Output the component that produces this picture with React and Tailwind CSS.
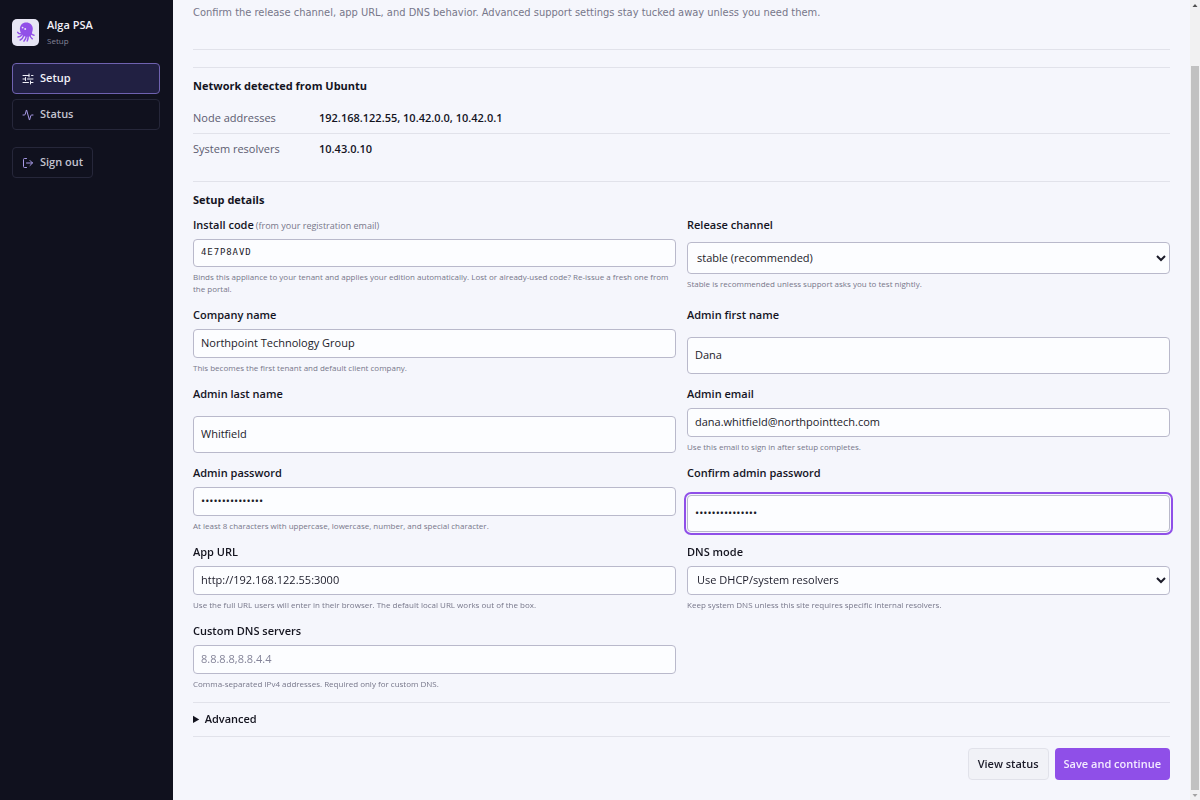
import React, { useState } from 'react';
import { Activity, LogOut } from 'lucide-react';

const boxClass =
    'block w-full rounded-[4px] border border-[#b9b9cb] bg-[#fcfdff] pb-0.5 text-[#1b1b29] placeholder-[#85859a] outline-[#8f4fe8] focus:outline-2 focus:outline-offset-1';
const inputClass = `${boxClass} px-[7px] text-[11px] leading-4`;
const selectClass = `${boxClass} px-[5px] text-[11px] leading-4`;

const OctopusLogo = () => (
    <svg viewBox="0 0 27 27" className="h-[27px] w-[27px] shrink-0" aria-hidden="true">
        <rect width="27" height="27" rx="5" fill="#e6e5f4" />
        <path
            d="M14.300 3.400c3.700 0 6.500 2.600 6.500 6.200 0 2.200-.7 3.600-1 5.100-.4 1.700-2 3.100-4.500 3.100-2.800 0-5-1.100-5.900-3-.9-1.600-1.500-3-1.500-4.900 0-3.800 2.600-6.500 6.400-6.500z"
            fill="#9150e8"
        />
        <g fill="none" stroke="#9150e8" strokeWidth="1.500" strokeLinecap="round">
            <path d="M9.200 14.800c-1.500.2-2.700-.3-3.500-1.500" />
            <path d="M10 15.800c-1.100 1.400-2.500 2.200-4 2.200" />
            <path d="M11.800 16.400c-.7 2-1.800 3.500-3.600 4.600" />
            <path d="M14.500 16.600c-.4 2.200-1.100 3.900-2.500 5.500" />
            <path d="M16.200 16.400c.1 2.300-.1 3.900-1 5.600" />
            <path d="M17.600 15.600c.5 1.900 1.300 3.200 2.700 4.200" />
            <path d="M18.700 13.900c.8 1.500 1.900 2.300 3.300 2.400" />
        </g>
        <circle cx="10.600" cy="8.600" r=".9" fill="#e6e5f4" />
        <circle cx="13.200" cy="10" r="1" fill="#e6e5f4" />
    </svg>
);

const SettingsIcon = () => (
    <svg
        viewBox="0 0 24 24"
        className="h-3 w-3 shrink-0"
        fill="none"
        stroke="currentColor"
        strokeWidth="2"
        strokeLinecap="round"
        aria-hidden="true"
    >
        <path d="M2 5h12M19 5h3M14 2v6M2 12h5M11 12h11M7 9v6M2 19h11M17 19h5M17 16v6" />
    </svg>
);

const Field = ({ id, label, note, hint, gap = 'gap-[6px]', children }) => (
    <div className={`flex flex-col ${gap}`}>
        <label htmlFor={id} className="text-[11px] font-semibold leading-4 text-[#14141f]">
            {label}
            {note && <span className="ml-[2px] text-[9px] font-normal leading-none text-[#77778a]">{note}</span>}
        </label>
        <div className="flex flex-col gap-1">
            {children}
            {hint && <p className="text-[8px] leading-3 text-[#77778a]">{hint}</p>}
        </div>
    </div>
);

const DetailRow = ({ name, value }) => (
    <div className="flex items-center py-[7px] text-[11px] leading-4">
        <dt className="w-[126px] font-medium text-[#5c5c70]">{name}</dt>
        <dd className="font-semibold text-[#14141f]">{value}</dd>
    </div>
);

const Sidebar = () => (
    <aside className="w-[173px] shrink-0 bg-[#10111e] pl-3 pr-[13px] pt-4">
        <div className="flex items-center gap-2">
            <OctopusLogo />
            <div>
                <p className="text-[11px] font-semibold leading-[18px] text-[#f0f0f8]">Alga PSA</p>
                <p className="text-[8px] leading-[14px] text-[#85859a]">Setup</p>
            </div>
        </div>

        <nav className="mt-[15px] flex flex-col gap-[5px] text-[11px] font-semibold">
            <a
                href="#setup"
                className="flex h-[31px] items-center gap-[6px] rounded-[4px] border border-[#6f62b0] bg-[#212042] px-[9px] text-[#f0f0f8]"
            >
                <SettingsIcon />
                Setup
            </a>
            <a
                href="#status"
                className="flex h-[31px] items-center gap-[6px] rounded-[4px] border border-[#26273a] px-[9px] text-[#c3c3cf]"
            >
                <Activity className="h-3 w-3 text-[#a99be8]" />
                Status
            </a>
        </nav>

        <button
            type="button"
            className="mt-[17px] flex h-[31px] items-center gap-[6px] rounded-[4px] border border-[#26273a] px-[9px] text-[11px] font-semibold text-[#c3c3cf]"
        >
            <LogOut className="h-3 w-3 text-[#a99be8]" />
            Sign out
        </button>
    </aside>
);

const ScrollTrack = () => (
    <div className="flex w-[10px] shrink-0 flex-col items-center bg-[#f1f1f2]" aria-hidden="true">
        <svg viewBox="0 0 10 10" className="h-[10px] w-[10px]">
            <path d="M5 4 7.500 7h-5z" fill="#505050" />
        </svg>
        <div className="mt-14 w-2 grow bg-[#c1c1c1]" />
        <svg viewBox="0 0 10 10" className="h-[10px] w-[10px]">
            <path d="M5 7 2.500 4h5z" fill="#a3a3a3" />
        </svg>
    </div>
);

export default function App() {
    const [form, setForm] = useState({
        code: '4E7P8AVD',
        channel: 'stable',
        company: 'Northpoint Technology Group',
        firstName: 'Dana',
        lastName: 'Whitfield',
        email: 'dana.whitfield@northpointtech.com',
        password: 'Northpoint#2024',
        confirm: 'Northpoint#2024',
        appUrl: 'http://192.168.122.55:3000',
        dnsMode: 'system',
        dnsServers: '',
    });
    const bind = (key) => ({
        id: key,
        value: form[key],
        onChange: (e) => setForm({ ...form, [key]: e.target.value }),
    });

    return (
        <div className="flex min-h-screen bg-[#f5f6fc] font-['Open_Sans','Noto_Sans',sans-serif]">
            <Sidebar />

            <main className="min-w-0 grow px-5 pb-5">
                <header className="border-b border-[#e1e2ea] pb-[28px] pt-[5px]">
                    <p className="font-['DejaVu_Sans_Condensed','Open_Sans',sans-serif] text-[11px] leading-4 text-[#77778a]">
                        Confirm the release channel, app URL, and DNS behavior. Advanced support settings stay tucked
                        away unless you need them.
                    </p>
                </header>

                {/* Detected network */}
                <section className="mt-[17px] border-t border-[#e1e2ea] pb-[17px] pt-[10px]">
                    <h2 className="text-[11px] font-bold leading-4 text-[#14141f]">Network detected from Ubuntu</h2>
                    <dl className="mt-[9px] divide-y divide-[#e1e2ea]">
                        <DetailRow name="Node addresses" value="192.168.122.55, 10.42.0.0, 10.42.0.1" />
                        <DetailRow name="System resolvers" value="10.43.0.10" />
                    </dl>
                </section>

                <form onSubmit={(e) => e.preventDefault()}>
                    <section className="border-t border-[#e1e2ea] pt-[10px]">
                        <h2 className="text-[11px] font-bold leading-4 text-[#14141f]">Setup details</h2>

                        <div className="mt-[9px] grid grid-cols-2 gap-x-[11px] gap-y-3">
                            <Field
                                id="code"
                                label="Install code"
                                note="(from your registration email)"
                                hint="Binds this appliance to your tenant and applies your edition automatically. Lost or already-used code? Re-issue a fresh one from the portal."
                            >
                                <input
                                    {...bind('code')}
                                    className={`${boxClass} h-7 px-[7px] font-['DejaVu_Sans_Mono',monospace] text-[9px] tracking-widest`}
                                />
                            </Field>
                            <Field
                                id="channel"
                                label="Release channel"
                                gap="gap-[9px]"
                                hint="Stable is recommended unless support asks you to test nightly."
                            >
                                <select {...bind('channel')} className={`${selectClass} h-8`}>
                                    <option value="stable">stable (recommended)</option>
                                    <option value="nightly">nightly</option>
                                </select>
                            </Field>

                            <Field
                                id="company"
                                label="Company name"
                                hint="This becomes the first tenant and default client company."
                            >
                                <input {...bind('company')} className={`${inputClass} h-[29px]`} />
                            </Field>
                            <Field id="firstName" label="Admin first name" gap="gap-[14px]">
                                <input {...bind('firstName')} className={`${inputClass} h-[37px]`} />
                            </Field>

                            <Field id="lastName" label="Admin last name" gap="gap-[14px]">
                                <input {...bind('lastName')} className={`${inputClass} h-[37px]`} />
                            </Field>
                            <Field
                                id="email"
                                label="Admin email"
                                hint="Use this email to sign in after setup completes."
                            >
                                <input type="email" {...bind('email')} className={`${inputClass} h-[29px]`} />
                            </Field>

                            <Field
                                id="password"
                                label="Admin password"
                                hint="At least 8 characters with uppercase, lowercase, number, and special character."
                            >
                                <input type="password" {...bind('password')} className={`${inputClass} h-[29px]`} />
                            </Field>
                            <Field id="confirm" label="Confirm admin password" gap="gap-[14px]">
                                <input
                                    type="password"
                                    autoFocus
                                    {...bind('confirm')}
                                    className={`${inputClass} h-[37px] caret-transparent`}
                                />
                            </Field>

                            <Field
                                id="appUrl"
                                label="App URL"
                                hint="Use the full URL users will enter in their browser. The default local URL works out of the box."
                            >
                                <input {...bind('appUrl')} className={`${inputClass} h-[29px]`} />
                            </Field>
                            <Field
                                id="dnsMode"
                                label="DNS mode"
                                hint="Keep system DNS unless this site requires specific internal resolvers."
                            >
                                <select {...bind('dnsMode')} className={`${selectClass} h-[29px]`}>
                                    <option value="system">Use DHCP/system resolvers</option>
                                    <option value="custom">Use custom DNS servers</option>
                                </select>
                            </Field>

                            <Field
                                id="dnsServers"
                                label="Custom DNS servers"
                                hint="Comma-separated IPv4 addresses. Required only for custom DNS."
                            >
                                <input
                                    placeholder="8.8.8.8,8.8.4.4"
                                    {...bind('dnsServers')}
                                    className={`${inputClass} h-[29px]`}
                                />
                            </Field>
                        </div>
                    </section>

                    <details className="mt-3 border-y border-[#e1e2ea] pb-[9px] pt-2 text-[11px] leading-4 text-[#14141f]">
                        <summary className="cursor-pointer font-semibold">Advanced</summary>
                    </details>

                    <div className="mt-[11px] flex justify-end gap-[6px] text-[11px] font-semibold">
                        <button
                            type="button"
                            className="h-8 rounded-[4px] border border-[#e1e2ea] bg-[#f1f2f7] px-[9px] text-[#1b1b29]"
                        >
                            View status
                        </button>
                        <button type="submit" className="h-8 rounded-[4px] bg-[#8f4fe8] px-[9px] text-[#f3ebff]">
                            Save and continue
                        </button>
                    </div>
                </form>
            </main>

            <ScrollTrack />
        </div>
    );
}
